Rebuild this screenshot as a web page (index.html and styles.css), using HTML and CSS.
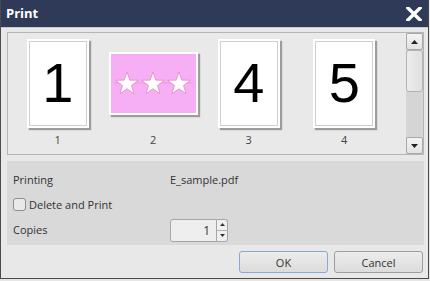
FILE: index.html
```html
<!DOCTYPE html>
<html>
<head>
<meta charset="utf-8">
<link rel="stylesheet" href="styles.css">
</head>
<body>
<div class="dialog">
  <div class="titlebar">
    <span class="title">Print</span>
    <svg class="close" width="16" height="14" viewBox="0 0 16 14"><path d="M2 1 L14 13 M14 1 L2 13" stroke="#fff" stroke-width="3.4" stroke-linecap="square"/></svg>
  </div>
  <div class="content">
    <div class="preview">
      <div class="pages">
        <div class="page">
          <div class="thumb-area"><div class="card portrait"><div class="sheet"><span class="digit">1</span></div></div></div>
          <div class="plabel">1</div>
        </div>
        <div class="page">
          <div class="thumb-area"><div class="card landscape"><div class="sheet pink">
            <svg width="85" height="59" viewBox="0 0 85 59">
              <line x1="3" y1="29" x2="82" y2="29" stroke="#e59ade" stroke-width="0.8"/>
              <g fill="#fff" stroke="#e07ab0" stroke-width="0.6">
                <polygon transform="translate(16 30) scale(1.08)" points="0,-11 2.59,-3.56 10.46,-3.4 4.18,1.36 6.47,8.9 0,4.4 -6.47,8.9 -4.18,1.36 -10.46,-3.4 -2.59,-3.56"/>
                <polygon transform="translate(42 30) scale(1.08)" points="0,-11 2.59,-3.56 10.46,-3.4 4.18,1.36 6.47,8.9 0,4.4 -6.47,8.9 -4.18,1.36 -10.46,-3.4 -2.59,-3.56"/>
                <polygon transform="translate(68 30) scale(1.08)" points="0,-11 2.59,-3.56 10.46,-3.4 4.18,1.36 6.47,8.9 0,4.4 -6.47,8.9 -4.18,1.36 -10.46,-3.4 -2.59,-3.56"/>
              </g>
            </svg>
          </div></div></div>
          <div class="plabel">2</div>
        </div>
        <div class="page">
          <div class="thumb-area"><div class="card portrait"><div class="sheet"><span class="digit">4</span></div></div></div>
          <div class="plabel">3</div>
        </div>
        <div class="page">
          <div class="thumb-area"><div class="card portrait"><div class="sheet"><span class="digit">5</span></div></div></div>
          <div class="plabel">4</div>
        </div>
      </div>
      <div class="scrollbar">
        <div class="sbtn"><svg width="7" height="4" viewBox="0 0 7 4"><path d="M3.5 0 L7 4 L0 4Z" fill="#222"/></svg></div>
        <div class="thumb"></div>
        <div class="track"></div>
        <div class="sbtn"><svg width="7" height="4" viewBox="0 0 7 4"><path d="M0 0 L7 0 L3.5 4Z" fill="#222"/></svg></div>
      </div>
    </div>
    <div class="settings">
      <div class="row"><span class="label">Printing</span><span class="value">E_sample.pdf</span></div>
      <div class="row"><label class="check"><span class="box"></span>Delete and Print</label></div>
      <div class="row"><span class="label">Copies</span>
        <div class="spin"><div class="spin-input">1</div><div class="spin-btns">
          <div class="sb"><svg width="5" height="3" viewBox="0 0 5 3"><path d="M2.5 0 L5 3 L0 3Z" fill="#333"/></svg></div>
          <div class="sb"><svg width="5" height="3" viewBox="0 0 5 3"><path d="M0 0 L5 0 L2.5 3Z" fill="#333"/></svg></div>
        </div></div>
      </div>
    </div>
    <div class="buttons">
      <button class="btn ok">OK</button>
      <button class="btn">Cancel</button>
    </div>
  </div>
</div>
</body>
</html>
```
FILE: styles.css
```css
html, body {
  margin: 0;
  padding: 0;
  background: #e6e6e6;
}
body {
  font-family: "Open Sans", "Noto Sans", sans-serif;
  font-size: 11px;
  color: #333;
}
.dialog {
  width: 427px;
  height: 277px;
  border: 1px solid #4b4b4b;
  border-top-color: #2f3a58;
  background: #e8e8e8;
  display: flex;
  flex-direction: column;
}
.titlebar {
  height: 26px;
  background: #2f3a58;
  display: flex;
  align-items: center;
  justify-content: space-between;
  padding: 0 6px 0 5px;
  border-bottom: 1px solid #c9c9c9;
}
.title {
  color: #fff;
  font-weight: bold;
  font-size: 13px;
  margin-top: -2px;
}
.close {
  margin-top: -1px;
}
.content {
  flex: 1;
  display: flex;
  flex-direction: column;
  padding: 4px 4px 0 6px;
}
.preview {
  height: 121px;
  border: 1px solid #b5b5b5;
  background: #e9e9e9;
  display: flex;
}
.pages {
  flex: 1;
  display: grid;
  grid-template-columns: repeat(4, 95.5px);
  padding: 5px 0 0 2px;
}
.page {
  display: flex;
  flex-direction: column;
  align-items: center;
}
.thumb-area {
  height: 90px;
  width: 100%;
  display: flex;
  align-items: center;
  justify-content: center;
}
.card {
  background: #fff;
  padding: 2px;
  box-shadow: 2px 2px 1px #9c9c9c;
  box-sizing: border-box;
}
.portrait {
  width: 62px;
  height: 89px;
}
.landscape {
  width: 89px;
  height: 63px;
}
.sheet {
  width: 100%;
  height: 100%;
  box-sizing: border-box;
  border: 1px solid #cfcfcf;
  display: flex;
  align-items: center;
  justify-content: center;
  overflow: hidden;
}
.sheet.pink {
  border: none;
  background: #f6aef5;
}
.digit {
  font-family: "Liberation Sans", Arial, sans-serif;
  font-size: 56px;
  color: #000;
  line-height: 1;
}
.plabel {
  margin-top: 5px;
  line-height: 14px;
  color: #444;
}
.scrollbar {
  width: 17px;
  display: flex;
  flex-direction: column;
  background: #d5d5d5;
}
.sbtn {
  height: 15px;
  border: 1px solid #a9a9a9;
  border-radius: 2px;
  background: linear-gradient(#f4f4f4, #e2e2e2);
  display: flex;
  align-items: center;
  justify-content: center;
}
.thumb {
  height: 42px;
  border: 1px solid #b3b3b3;
  border-radius: 3px;
  background: linear-gradient(90deg, #ececec, #e0e0e0);
  box-sizing: border-box;
}
.track {
  flex: 1;
}
.settings {
  margin-top: 6px;
  height: 78px;
  background: #d9d9d9;
  padding: 6px 6px 0 6px;
}
.row {
  height: 25px;
  display: flex;
  align-items: center;
}
.label {
  width: 157px;
}
.check {
  display: flex;
  align-items: center;
}
.box {
  width: 11px;
  height: 11px;
  border: 1px solid #8e8e8e;
  border-radius: 3px;
  background: #e9e9e9;
  margin-right: 3px;
}
.spin {
  display: flex;
  height: 23px;
  margin-top: 1px;
}
.spin-input {
  width: 47px;
  border: 1px solid #a6a6a6;
  border-radius: 3px 0 0 3px;
  background: #eeeeee;
  box-sizing: border-box;
  text-align: right;
  padding-right: 6px;
  line-height: 21px;
  font-size: 12px;
  color: #333;
}
.spin-btns {
  width: 11px;
  display: flex;
  flex-direction: column;
  border: 1px solid #a6a6a6;
  border-left: none;
  border-radius: 0 3px 3px 0;
  box-sizing: border-box;
  background: #f0f0f0;
}
.sb {
  flex: 1;
  display: flex;
  align-items: center;
  justify-content: center;
}
.sb + .sb {
  border-top: 1px solid #b0b0b0;
}
.buttons {
  display: flex;
  justify-content: flex-end;
  gap: 6px;
  margin-top: 6px;
  margin-right: 1px;
}
.btn {
  width: 89px;
  height: 22px;
  font-family: "Open Sans", "Noto Sans", sans-serif;
  font-size: 11px;
  color: #333;
  border: 1px solid #9d9d9d;
  border-radius: 3px;
  background: linear-gradient(#ececec, #dcdcdc);
  padding: 0;
}
.btn.ok {
  border-color: #88a9d8;
}
```
